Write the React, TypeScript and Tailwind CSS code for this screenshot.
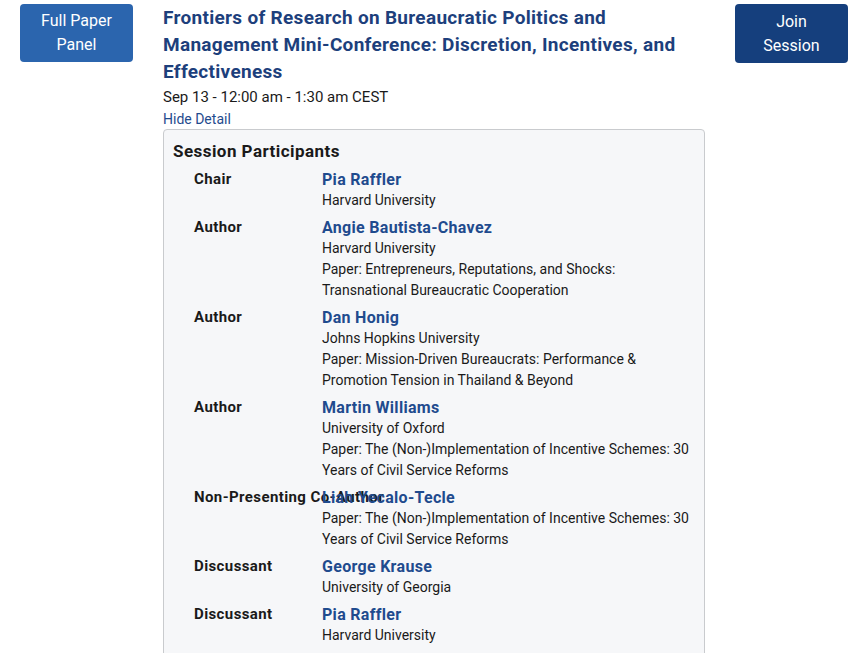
import React from "react";

type P = { role: string; name: string; lines: string[] };

const people: P[] = [
  { role: "Chair", name: "Pia Raffler", lines: ["Harvard University"] },
  {
    role: "Author",
    name: "Angie Bautista-Chavez",
    lines: ["Harvard University", "Paper: Entrepreneurs, Reputations, and Shocks: Transnational Bureaucratic Cooperation"],
  },
  {
    role: "Author",
    name: "Dan Honig",
    lines: ["Johns Hopkins University", "Paper: Mission-Driven Bureaucrats: Performance & Promotion Tension in Thailand & Beyond"],
  },
  {
    role: "Author",
    name: "Martin Williams",
    lines: ["University of Oxford", "Paper: The (Non-)Implementation of Incentive Schemes: 30 Years of Civil Service Reforms"],
  },
  {
    role: "Non-Presenting Co-Author",
    name: "Liah Yecalo-Tecle",
    lines: ["Paper: The (Non-)Implementation of Incentive Schemes: 30 Years of Civil Service Reforms"],
  },
  { role: "Discussant", name: "George Krause", lines: ["University of Georgia"] },
  { role: "Discussant", name: "Pia Raffler", lines: ["Harvard University"] },
];

export default function App() {
  return (
    <div
      className="w-[867px] h-[653px] overflow-hidden bg-white text-[#1a1a1a]"
      style={{ fontFamily: "Roboto, 'Liberation Sans', sans-serif" }}
    >
      <div className="flex items-start pt-[4px]">
        <div className="ml-[20px] w-[113px] h-[58px] rounded-[4px] bg-[#2b65ae] text-white text-[16px] leading-[24px] flex flex-col items-center justify-center shrink-0">
          <span>Full Paper</span>
          <span>Panel</span>
        </div>
        <div className="ml-[30px] w-[542px] shrink-0">
          <h1 className="text-[19px] leading-[27px] font-bold tracking-[0.3px] text-[#1d3f7c] pr-[20px]">
            Frontiers of Research on Bureaucratic Politics and Management Mini-Conference: Discretion, Incentives, and Effectiveness
          </h1>
          <div className="text-[15px] leading-[24px]">Sep 13 - 12:00 am - 1:30 am CEST</div>
          <div className="text-[14px] leading-[21px] text-[#1f4b8e]">Hide Detail</div>
          <div className="mt-[-1px] border border-[#c9cbce] rounded-[4px] bg-[#f6f7f9] pl-[9px] pr-[10px] pt-[9px] pb-[20px]">
            <div className="text-[17px] leading-[24px] font-bold tracking-[0.45px] text-[#1a1a1a]">Session Participants</div>
            <div className="mt-[6px] flex flex-col gap-[6px]">
              {people.map((p, i) => (
                <div key={i} className="flex pl-[21px]">
                  <div className="w-[128px] shrink-0 whitespace-nowrap text-[15px] leading-[21px] font-bold tracking-[0.4px] text-[#1a1a1a]">
                    {p.role}
                  </div>
                  <div className="flex-1 relative">
                    <div className="text-[16px] leading-[21px] font-bold tracking-[0.3px] text-[#1f4b8e]">{p.name}</div>
                    {p.lines.map((l, j) => (
                      <div key={j} className="text-[14px] leading-[21px] text-[#1a1a1a]">
                        {l}
                      </div>
                    ))}
                  </div>
                </div>
              ))}
            </div>
          </div>
        </div>
        <div className="ml-[30px] w-[113px] h-[59px] rounded-[4px] bg-[#153f7d] text-white text-[16px] leading-[24px] flex flex-col items-center justify-center shrink-0">
          <span>Join</span>
          <span>Session</span>
        </div>
      </div>
    </div>
  );
}
